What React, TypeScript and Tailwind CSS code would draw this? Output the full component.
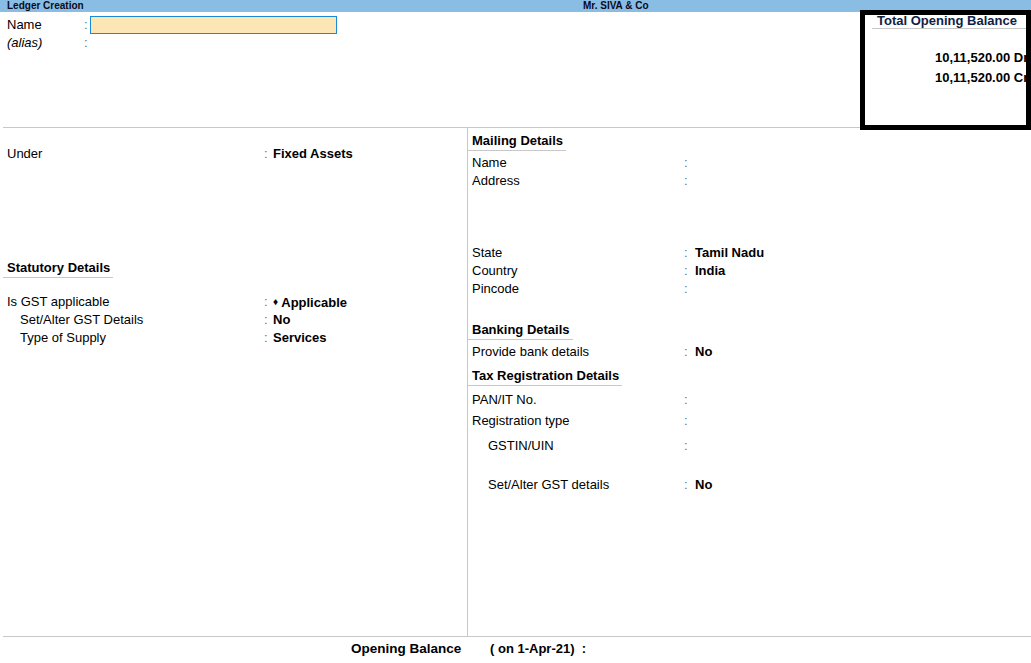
import React from "react";

const Colon = ({ w = "w-[9px]" }: { w?: string }) => (
  <span className={`${w} shrink-0 text-[#5f7088]`}>:</span>
);

function LRow({ label, value, indent = false, italic = false, mt = "" }: { label: string; value?: React.ReactNode; indent?: boolean; italic?: boolean; mt?: string }) {
  return (
    <div className={`flex h-[18px] leading-[18px] ${mt}`}>
      <span className={`w-[257px] shrink-0 ${indent ? "pl-[13px]" : ""} ${italic ? "italic" : ""}`}>{label}</span>
      <Colon />
      <span className="font-bold whitespace-nowrap">{value}</span>
    </div>
  );
}

function RRow({ label, value, indent = false, mt = "" }: { label: string; value?: React.ReactNode; indent?: boolean; mt?: string }) {
  return (
    <div className={`flex h-[18px] leading-[18px] pl-[4px] ${mt}`}>
      <span className={`w-[212px] shrink-0 ${indent ? "pl-[16px]" : ""}`}>{label}</span>
      <Colon w="w-[11px]" />
      <span className="font-bold whitespace-nowrap">{value}</span>
    </div>
  );
}

function Heading({ text, mt = "" }: { text: string; mt?: string }) {
  return (
    <div className={`flex ${mt}`}>
      <div className="h-[18px] leading-[15px] pl-[4px] pr-[3px] font-bold border-b border-[#c8c8c8] whitespace-nowrap">
        {text}
      </div>
    </div>
  );
}

export default function App() {
  return (
    <div
      className="relative w-[1031px] h-[663px] overflow-hidden bg-white text-black text-[13px]"
      style={{ fontFamily: '"Liberation Sans", Arial, sans-serif' }}
    >
      {/* Title bar */}
      <div className="h-[12px] bg-[#8abde4] flex items-center text-[10px] font-bold leading-[12px] text-[#0a0a1a]">
        <span className="w-[583px] pl-[7px]">Ledger Creation</span>
        <span>Mr. SIVA &amp; Co</span>
      </div>

      {/* Top area */}
      <div className="h-[115px] pt-[4px]">
        <div className="flex h-[18px] leading-[18px] pl-[7px] items-center">
          <span className="w-[77px] shrink-0">Name</span>
          <Colon w="w-[6px]" />
          <div className="w-[247px] h-[18px] bg-[#fde6b6] border border-[#1a8ad4]" />
        </div>
        <div className="flex h-[18px] leading-[18px] pl-[7px]">
          <span className="w-[77px] shrink-0 italic">(alias)</span>
          <Colon w="w-[6px]" />
        </div>
      </div>

      {/* Main area */}
      <div className="ml-[3px] border-t border-b border-[#c8c8c8] h-[510px] flex">
        {/* Left column */}
        <div className="w-[465px] border-r border-[#c8c8c8] pl-[4px]">
          <LRow label="Under" value="Fixed Assets" mt="mt-[17px]" />
          <div className="-ml-[4px] mt-[97px]">
            <Heading text="Statutory Details" />
          </div>
          <LRow
            label="Is GST applicable"
            value={
              <span>
                <span className="text-[10px] align-[2px]">♦</span> Applicable
              </span>
            }
            mt="mt-[15px]"
          />
          <LRow label="Set/Alter GST Details" value="No" indent />
          <LRow label="Type of Supply" value="Services" indent />
        </div>

        {/* Right column */}
        <div className="flex-1">
          <Heading text="Mailing Details" mt="mt-[5px]" />
          <RRow label="Name" mt="mt-[3px]" />
          <RRow label="Address" />
          <RRow label="State" value="Tamil Nadu" mt="mt-[54px]" />
          <RRow label="Country" value="India" />
          <RRow label="Pincode" />
          <Heading text="Banking Details" mt="mt-[24px]" />
          <RRow label="Provide bank details" value="No" mt="mt-[3px]" />
          <Heading text="Tax Registration Details" mt="mt-[7px]" />
          <RRow label="PAN/IT No." mt="mt-[5px]" />
          <RRow label="Registration type" mt="mt-[3px]" />
          <RRow label="GSTIN/UIN" indent mt="mt-[7px]" />
          <RRow label="Set/Alter GST details" value="No" indent mt="mt-[21px]" />
        </div>
      </div>

      {/* Bottom row */}
      <div className="flex pt-[3px] h-[18px] leading-[18px] font-bold text-[13.5px]">
        <span className="w-[490px] pl-[351px] whitespace-nowrap">Opening Balance</span>
        <span className="whitespace-nowrap text-[13px]">( on 1-Apr-21)&nbsp; :</span>
      </div>

      {/* Total Opening Balance panel */}
      <div className="absolute left-[860px] top-[10px] w-[171px] h-[120px] border-[5px] border-black bg-white overflow-hidden">
        <div className="ml-[7px] pl-[5px] border-b border-[#c8c8c8] h-[14px] leading-[12px] font-bold whitespace-nowrap text-[#0f1e45] w-[200px]">
          Total Opening Balance
        </div>
        <div className="mt-[19px] pl-[70px] font-bold whitespace-nowrap leading-[20px]">10,11,520.00 Dr</div>
        <div className="pl-[70px] font-bold whitespace-nowrap leading-[20px]">10,11,520.00 Cr</div>
      </div>
    </div>
  );
}
